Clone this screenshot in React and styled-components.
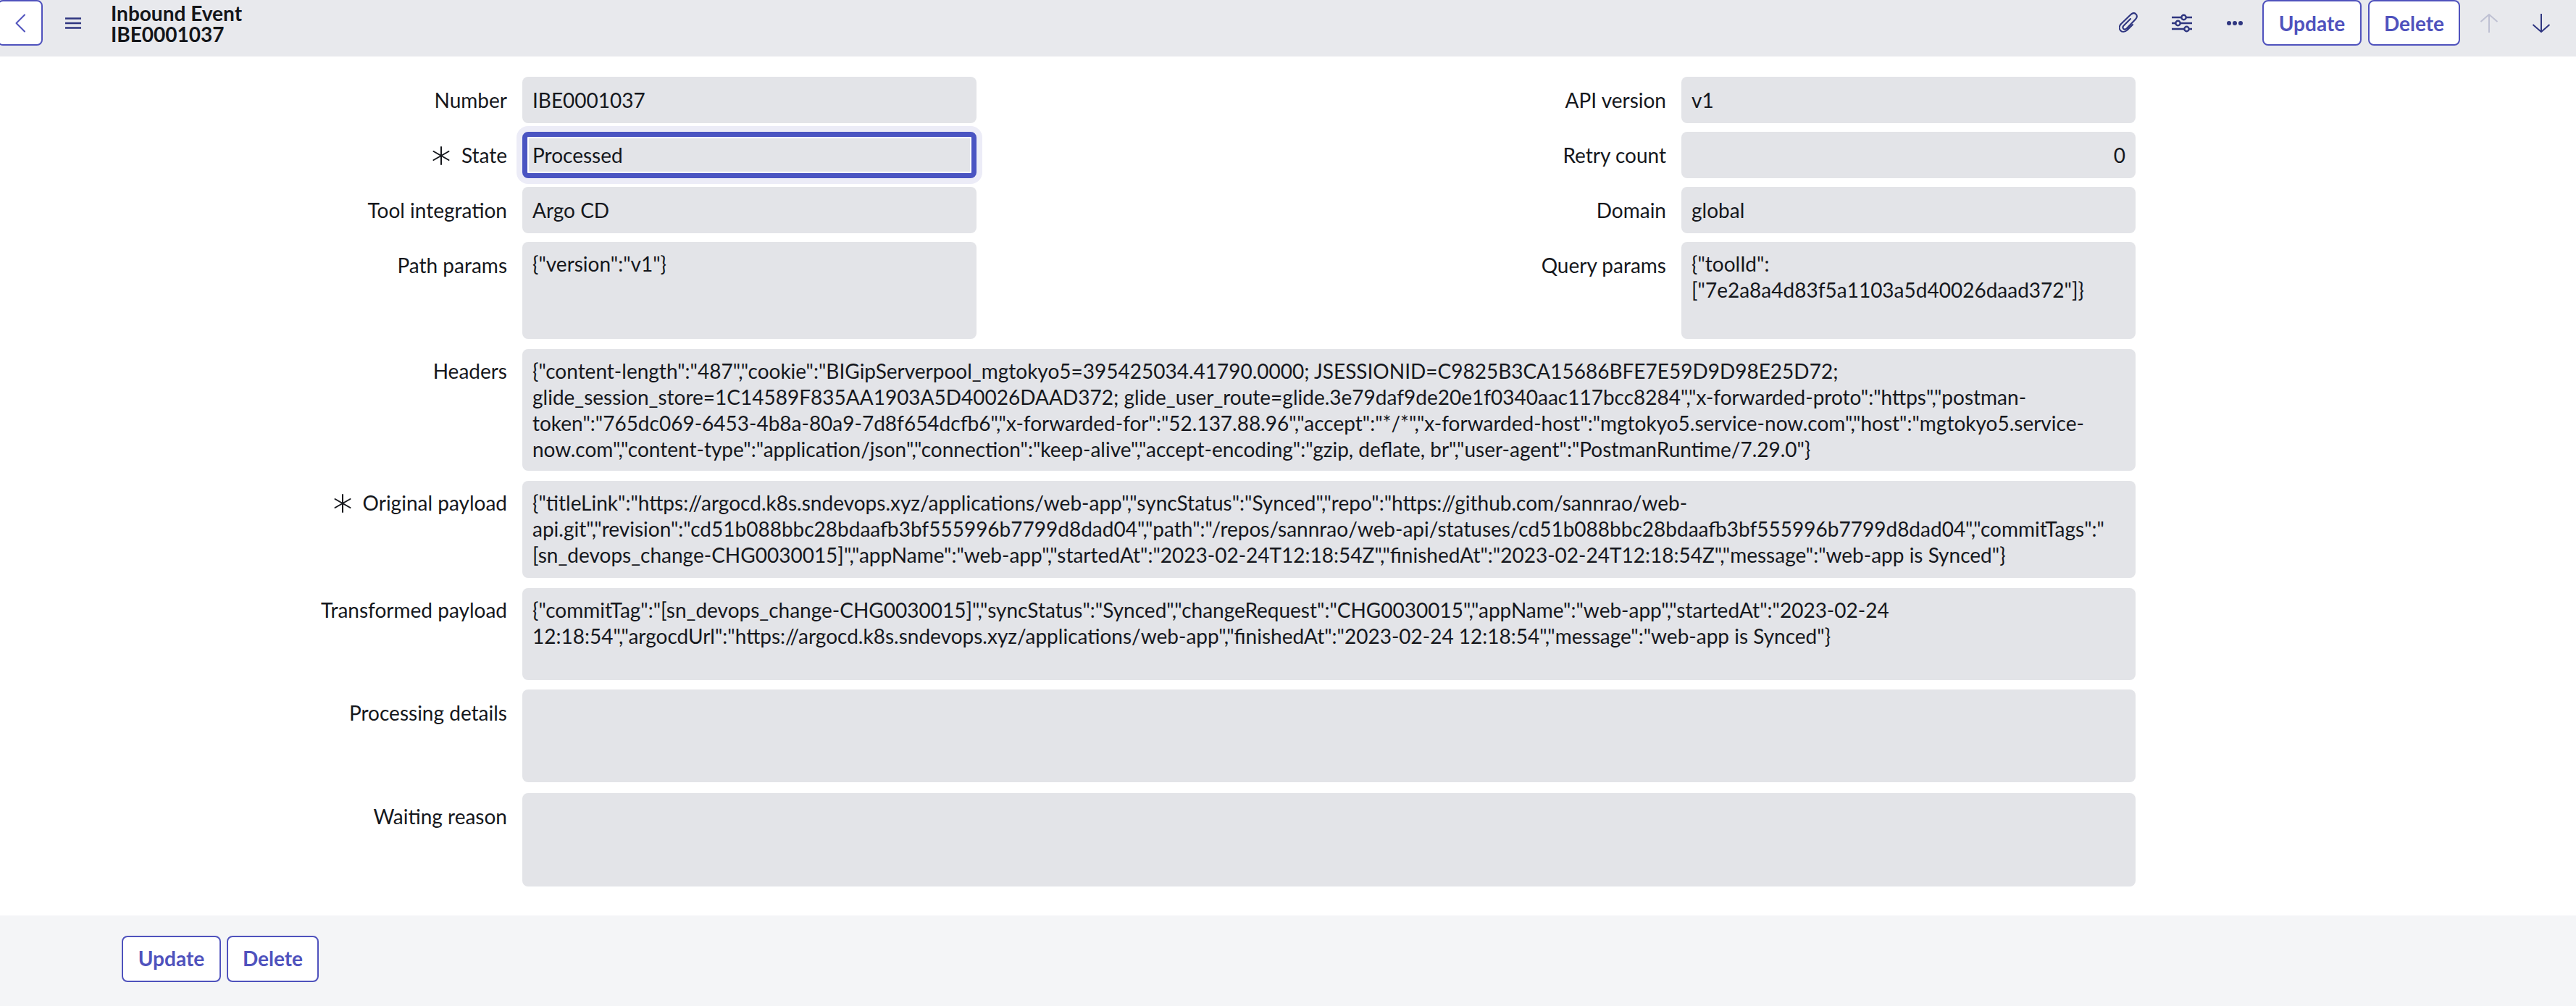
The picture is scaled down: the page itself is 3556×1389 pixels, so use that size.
import React from 'react'
import styled, { createGlobalStyle } from 'styled-components'

const GlobalStyle = createGlobalStyle`
  html, body {
    margin: 0;
    padding: 0;
    background: #fff;
  }
  body {
    font-family: Lato, "Liberation Sans", sans-serif;
    font-size: 28px;
    line-height: 36px;
    color: #15171c;
  }
  * {
    box-sizing: border-box;
  }
`

const Page = styled.div`
  width: 3556px;
  height: 1389px;
  display: flex;
  flex-direction: column;
  overflow: hidden;
`

const Header = styled.header`
  height: 78px;
  flex: none;
  display: flex;
  align-items: flex-start;
  background: #e8e9ed;
  padding-right: 12px;
`

const BackButton = styled.button`
  width: 63px;
  height: 63px;
  margin-left: -4px;
  padding: 0 3px 0 4px;
  display: flex;
  align-items: center;
  justify-content: center;
  background: #fff;
  border: 2.5px solid #4f52bd;
  border-radius: 8px;
  color: #4f52bd;
`

const IconButton = styled.span`
  width: ${props => props.wide ? '73px' : '72px'};
  height: 63px;
  flex: none;
  display: flex;
  align-items: center;
  justify-content: center;
  color: ${props => props.disabled ? '#bfc1d3' : '#2f3680'};
`

const MenuButton = styled(IconButton)`
  width: 46px;
  margin: 0 29px 0 19px;
`

const Title = styled.div`
  flex: 1;
  font-weight: 700;
  color: #14161a;
  line-height: 29px;
  padding-top: 4px;
`

const Actions = styled.div`
  display: flex;
  align-items: flex-start;
  gap: ${props => props.gap || 0}px;
`

const HeaderButtons = styled(Actions)`
  margin: 0 4px 0 2px;
`

const Button = styled.button`
  height: ${props => props.footer ? '64px' : '63px'};
  width: ${props => props.w}px;
  padding: 0 0 ${props => props.footer ? '3px' : '0'};
  background: #fff;
  border: 2.5px solid #4f52bd;
  border-radius: 8px;
  color: #4f52bd;
  font-family: Lato, "Liberation Sans", sans-serif;
  font-size: 28px;
  font-weight: 700;
`

const Form = styled.main`
  flex: 1;
  padding: 28px 0 0 168px;
  display: flex;
  flex-direction: column;
`

const Columns = styled.div`
  display: grid;
  grid-template-columns: 1180px 1180px;
  column-gap: 420px;
  margin-bottom: 14px;
`

const Column = styled.div`
  display: flex;
  flex-direction: column;
  gap: 12px;
`

const Row = styled.div`
  display: flex;
  width: ${props => props.full ? '2780px' : 'auto'};
  margin-bottom: ${props => props.mb || 0}px;
`

const Label = styled.label`
  width: 532px;
  flex: none;
  margin-right: 21px;
  padding-top: ${props => props.tight ? '12px' : '14px'};
  display: flex;
  justify-content: flex-end;
  align-items: flex-start;
  gap: 15px;
`

const Required = styled.svg`
  width: 26px;
  height: 26px;
  flex: none;
  margin-top: 6px;
`

const Field = styled.div`
  flex: 1;
  min-width: 0;
  height: ${props => props.h || 64}px;
  padding: ${props => props.h ? '12px' : '14px'} 14px 0;
  background: #e3e4e8;
  border-radius: 8px;
  text-align: ${props => props.right ? 'right' : 'left'};
`

const FocusedField = styled(Field)`
  padding: 7px 7px 0;
  border: 7px solid #4a54c2;
  box-shadow: 0 0 0 8px #ececf7, inset 0 0 0 2px #fff;
`

const Footer = styled.footer`
  height: 125px;
  flex: none;
  padding: 28px 0 0 168px;
  background: #f4f5f7;
`

const Ico = ({ children, w = 32, h = 32, sw = 2.5 }) => (
  <svg width={w} height={h} viewBox={`0 0 ${w} ${h}`} fill="none" stroke="currentColor" strokeWidth={sw} strokeLinecap="round" strokeLinejoin="round">
    {children}
  </svg>
)

const RequiredMark = () => (
  <Required viewBox="0 0 26 26" fill="none" stroke="currentColor" strokeWidth="2" strokeLinecap="round">
    <path d="M13 1v24M2.5 7l21 12M23.5 7l-21 12" />
  </Required>
)

const headers = '{"content-length":"487","cookie":"BIGipServerpool_mgtokyo5=395425034.41790.0000; JSESSIONID=C9825B3CA15686BFE7E59D9D98E25D72; glide_session_store=1C14589F835AA1903A5D40026DAAD372; glide_user_route=glide.3e79daf9de20e1f0340aac117bcc8284","x-forwarded-proto":"https","postman-token":"765dc069-6453-4b8a-80a9-7d8f654dcfb6","x-forwarded-for":"52.137.88.96","accept":"*/*","x-forwarded-host":"mgtokyo5.service-now.com","host":"mgtokyo5.service-now.com","content-type":"application/json","connection":"keep-alive","accept-encoding":"gzip, deflate, br","user-agent":"PostmanRuntime/7.29.0"}'
const original = '{"titleLink":"https://argocd.k8s.sndevops.xyz/applications/web-app","syncStatus":"Synced","repo":"https://github.com/sannrao/web-api.git","revision":"cd51b088bbc28bdaafb3bf555996b7799d8dad04","path":"/repos/sannrao/web-api/statuses/cd51b088bbc28bdaafb3bf555996b7799d8dad04","commitTags":"[sn_devops_change-CHG0030015]","appName":"web-app","startedAt":"2023-02-24T12:18:54Z","finishedAt":"2023-02-24T12:18:54Z","message":"web-app is Synced"}'
const transformed = '{"commitTag":"[sn_devops_change-CHG0030015]","syncStatus":"Synced","changeRequest":"CHG0030015","appName":"web-app","startedAt":"2023-02-24 12:18:54","argocdUrl":"https://argocd.k8s.sndevops.xyz/applications/web-app","finishedAt":"2023-02-24 12:18:54","message":"web-app is Synced"}'

export default function App() {
  return (
    <Page>
      <GlobalStyle />
      <Header>
        <BackButton>
          <Ico w={16} h={26} sw={2}><path d="M14 1.5L2.5 13 14 24.5" /></Ico>
        </BackButton>
        <MenuButton>
          <Ico w={24} h={18} sw={2.5}><path d="M1 2.5h22M1 9h22M1 15.5h22" strokeLinecap="butt" /></Ico>
        </MenuButton>
        <Title>Inbound Event<br />IBE0001037</Title>
        <Actions>
          <IconButton wide>
            <Ico w={27} h={30} sw={2.1}>
              <path d="M16 9L6.5 18.5c-1.5 1.5-1.2 3.2-.2 4.2s2.700 1.200 4.200-.2L23 9.500c2.500-2.500 2.300-5.300.5-7-1.700-1.700-4.500-1.900-7 .5L3 16c-3 3.200-2.800 7-.7 9.200 2.200 2.200 6 2.300 9.200-.7L19 17" />
            </Ico>
          </IconButton>
          <IconButton wide>
            <Ico w={30} h={28} sw={2.4}>
              <path d="M1 6h13M21 6h8M1 14h5M13 14h16M1 22h17M25 22h4" strokeLinecap="butt" />
              <circle cx="17.5" cy="6" r="3.2" />
              <circle cx="9.5" cy="14" r="3.2" />
              <circle cx="21.5" cy="22" r="3.2" />
            </Ico>
          </IconButton>
          <IconButton wide>
            <svg width="22" height="6" viewBox="0 0 22 6" fill="currentColor">
              <circle cx="3" cy="3" r="3" />
              <circle cx="11" cy="3" r="3" />
              <circle cx="19" cy="3" r="3" />
            </svg>
          </IconButton>
          <HeaderButtons gap={9}>
            <Button w={137}>Update</Button>
            <Button w={127}>Delete</Button>
          </HeaderButtons>
          <IconButton disabled>
            <Ico w={26} h={28} sw={2}><path d="M13 27V2M1.500 12L13 2l11.500 10" strokeLinecap="butt" /></Ico>
          </IconButton>
          <IconButton>
            <Ico w={26} h={28} sw={2}><path d="M13 1v25M1.500 16L13 26l11.500-10" strokeLinecap="butt" /></Ico>
          </IconButton>
        </Actions>
      </Header>

      <Form>
        <Columns>
          <Column>
            <Row><Label>Number</Label><Field>IBE0001037</Field></Row>
            <Row><Label><RequiredMark />State</Label><FocusedField>Processed</FocusedField></Row>
            <Row><Label>Tool integration</Label><Field>Argo CD</Field></Row>
            <Row><Label>Path params</Label><Field h={134}>{'{"version":"v1"}'}</Field></Row>
          </Column>
          <Column>
            <Row><Label>API version</Label><Field>v1</Field></Row>
            <Row><Label>Retry count</Label><Field right>0</Field></Row>
            <Row><Label>Domain</Label><Field>global</Field></Row>
            <Row><Label>Query params</Label><Field h={134}>{'{"toolId":["7e2a8a4d83f5a1103a5d40026daad372"]}'}</Field></Row>
          </Column>
        </Columns>
        <Row full mb={14}><Label tight>Headers</Label><Field h={168}>{headers}</Field></Row>
        <Row full mb={14}><Label tight><RequiredMark />Original payload</Label><Field h={134}>{original}</Field></Row>
        <Row full mb={13}><Label tight>Transformed payload</Label><Field h={127}>{transformed}</Field></Row>
        <Row full mb={15}><Label>Processing details</Label><Field h={128} /></Row>
        <Row full><Label>Waiting reason</Label><Field h={129} /></Row>
      </Form>

      <Footer>
        <Actions gap={8}>
          <Button footer w={137}>Update</Button>
          <Button footer w={127}>Delete</Button>
        </Actions>
      </Footer>
    </Page>
  )
}
